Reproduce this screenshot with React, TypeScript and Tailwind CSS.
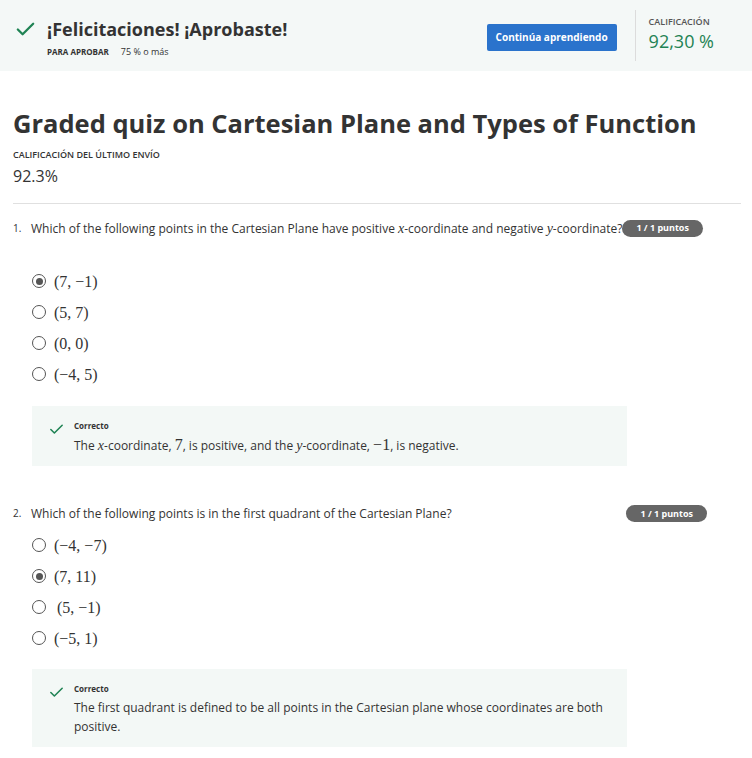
import { Check } from "lucide-react";

const sans = { fontFamily: '"Open Sans", "Noto Sans", sans-serif' };

function M({ children, i, size }: { children: React.ReactNode; i?: boolean; size?: string }) {
  return (
    <span
      className={`${size ?? "text-[14px]"} ${i ? "italic" : ""}`}
      style={{ fontFamily: '"Liberation Serif", "DejaVu Serif", serif' }}
    >
      {children}
    </span>
  );
}

function Radio({ on }: { on?: boolean }) {
  return (
    <span className="w-[14px] h-[14px] rounded-full border-[1.5px] border-[#555] flex items-center justify-center shrink-0">
      {on && <span className="w-[7px] h-[7px] rounded-full bg-[#555]" />}
    </span>
  );
}

function Option({ text, on, pad }: { text: string; on?: boolean; pad?: boolean }) {
  return (
    <div className="flex items-center gap-[8px] h-[31px]">
      <Radio on={on} />
      <span className={pad ? "pl-[3px]" : ""}>
        <M size="text-[16px]">{text}</M>
      </span>
    </div>
  );
}

function Badge() {
  return (
    <span className="bg-[#666666] text-white text-[9px] font-bold rounded-full h-[17px] px-[14px] flex items-center shrink-0">
      1 / 1 puntos
    </span>
  );
}

function Feedback({ children }: { children: React.ReactNode }) {
  return (
    <div className="bg-[#f3f8f6] w-[595px] ml-[19px] flex gap-[9px] pl-[16px] pr-[20px] pt-[14px] pb-[11px]">
      <Check className="w-[17px] h-[17px] text-[#1f8354] shrink-0 mt-[1px]" strokeWidth={2.2} />
      <div>
        <div className="text-[8px] font-bold text-[#333] leading-[12px]">Correcto</div>
        <div className="text-[12px] text-[#333] leading-[19px] mt-[3px]">{children}</div>
      </div>
    </div>
  );
}

export default function App() {
  return (
    <div className="w-[752px] min-h-[758px] bg-white text-[#333]" style={sans}>
      <div className="bg-[#f4f8f7] h-[71px] flex items-center pl-[14px] pr-[38px]">
        <Check className="w-[23px] h-[23px] text-[#1f8354] mt-[-12px]" strokeWidth={2.4} />
        <div className="ml-[10px] mt-[4px]">
          <div className="text-[18px] font-bold leading-[24px] text-[#333]">¡Felicitaciones! ¡Aprobaste!</div>
          <div className="text-[8px] mt-[4px] text-[#333] flex items-baseline">
            <span className="font-bold">PARA APROBAR</span>
            <span className="ml-[12px] text-[9px]">75 % o más</span>
          </div>
        </div>
        <div className="flex-1" />
        <button className="bg-[#2a73cc] text-white text-[10px] font-bold w-[130px] h-[27px] rounded-[2px] mt-[4px]">
          Continúa aprendiendo
        </button>
        <div className="w-px h-[51px] bg-[#dcdcdc] ml-[18px] mr-[13px]" />
        <div className="mt-[-4px]">
          <div className="text-[9px] font-semibold text-[#555] leading-[12px]">CALIFICACIÓN</div>
          <div className="text-[18px] text-[#1f8354] leading-[22px] mt-[2px]">92,30 %</div>
        </div>
      </div>

      <div className="px-[13px] pr-[11px]">
        <h1 className="text-[25.5px] font-bold leading-[34px] text-[#333] mt-[35px]">
          Graded quiz on Cartesian Plane and Types of Function
        </h1>
        <div className="text-[9px] font-semibold text-[#333] mt-[8px]">CALIFICACIÓN DEL ÚLTIMO ENVÍO</div>
        <div className="text-[16px] text-[#333] leading-[22px] mt-[3px]">92.3%</div>
        <div className="h-px bg-[#e0e0e0] mt-[16px]" />

        <div className="flex items-center mt-[14px] w-[694px]">
          <span className="text-[10px] w-[18px]">1.</span>
          <span className="text-[12px]">
            Which of the following points in the Cartesian Plane have positive <M i>x</M>-coordinate and negative{" "}
            <M i>y</M>-coordinate?
          </span>
          <Badge />
        </div>

        <div className="ml-[19px] mt-[27px]">
          <Option text="(7, −1)" on />
          <Option text="(5, 7)" />
          <Option text="(0, 0)" />
          <Option text="(−4, 5)" />
        </div>

        <div className="mt-[16px]">
          <Feedback>
            The <M i>x</M>-coordinate, <M size="text-[16px]">7</M>, is positive, and the <M i>y</M>-coordinate,{" "}
            <M size="text-[16px]">−1</M>, is negative.
          </Feedback>
        </div>

        <div className="flex items-center justify-between mt-[39px] w-[694px]">
          <div className="flex items-center">
            <span className="text-[10px] w-[18px]">2.</span>
            <span className="text-[12px]">Which of the following points is in the first quadrant of the Cartesian Plane?</span>
          </div>
          <Badge />
        </div>

        <div className="ml-[19px] mt-[7px]">
          <Option text="(−4, −7)" />
          <Option text="(7, 11)" on />
          <Option text="(5, −1)" pad />
          <Option text="(−5, 1)" />
        </div>

        <div className="mt-[15px]">
          <Feedback>
            The first quadrant is defined to be all points in the Cartesian plane whose coordinates are both positive.
          </Feedback>
        </div>
      </div>
    </div>
  );
}
